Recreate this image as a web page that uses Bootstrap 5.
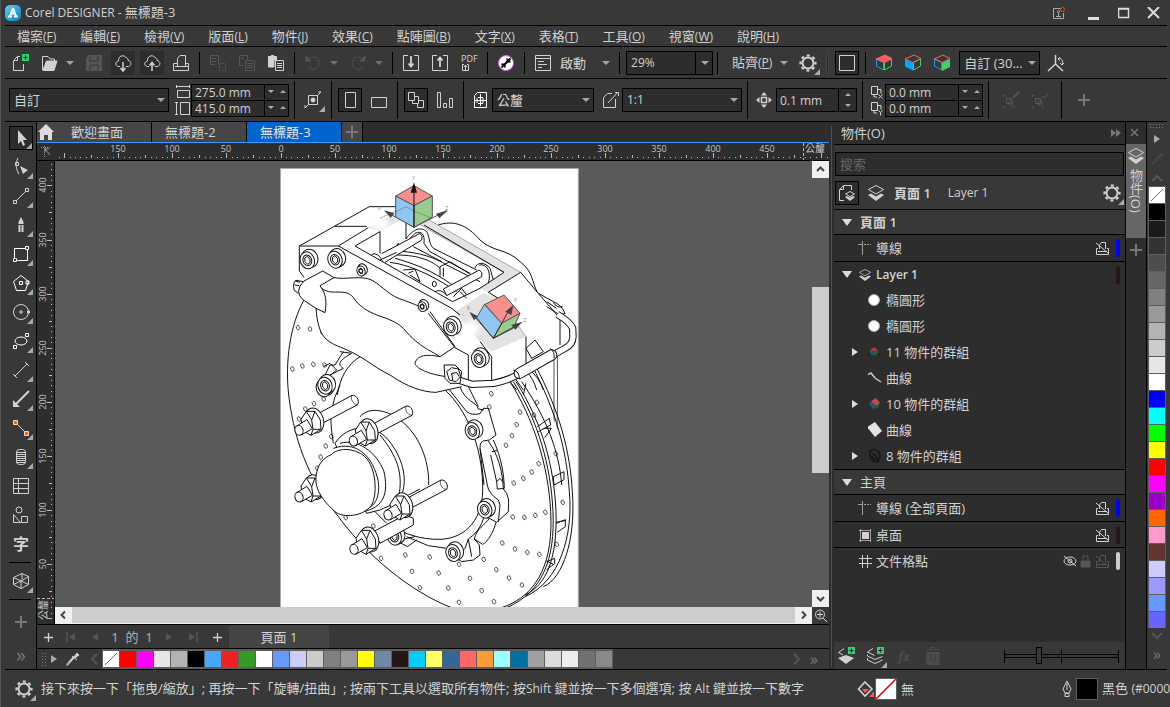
<!DOCTYPE html>
<html lang="zh-Hant">
<head>
<meta charset="utf-8">
<meta name="viewport" content="width=device-width, initial-scale=1">
<title>Corel DESIGNER - 無標題-3</title>
<link rel="stylesheet" href="https://cdn.jsdelivr.net/npm/bootstrap@5.3.0/dist/css/bootstrap.min.css">
<script defer src="https://cdn.jsdelivr.net/npm/bootstrap@5.3.0/dist/js/bootstrap.bundle.min.js"></script>
<style>
:root{--bar:#383838;--dark:#2d2d2d;--ink:#d2d2d2;--dim:#555;--line:#000}
body{background:var(--bar);color:var(--ink);font:13px/20px "Open Sans","Noto Sans CJK TC",sans-serif;height:100vh;overflow:hidden;border-left:1px solid #555;padding:0 3px 0 4px}
button{background:none;border:0;padding:0;color:inherit;font:inherit;flex:none}
svg{display:block;flex:none}
.lat{font-size:12px}
.mh{min-height:0}.mw{min-width:0}
.clip{overflow:hidden;white-space:nowrap}
.ic{width:24px;height:24px;fill:none;stroke:currentColor}
.line-t{border-top:1px solid var(--line)}
.titlebar{height:25px}
.titlebar button{width:26px;display:flex;justify-content:center}
.titlebar .wide1{width:34px}.titlebar .wide2{width:44px}
.menubar{height:21px}
.menubar a{color:var(--ink);text-decoration:none;padding:0 12px}
.stdbar{height:32px;padding-left:3px}
.propbar{height:43px;padding-left:4px}
.ib{width:24px;height:24px;margin-right:5px;position:relative}
.ib.on{border:1px solid var(--line);background:var(--dark)}
.ib.on .ic{margin:-1px}
.ib.cloudy{background:var(--dark)}
.off{color:var(--dim)}
.lighter{color:#777}
.fly::after{content:"";position:absolute;right:0;bottom:0;border:3px solid transparent;border-right-color:#aaa;border-bottom-color:#aaa}
.tri{width:8px;height:24px;margin-right:8px;position:relative}
.tri::after,.pick::after{content:"";display:block;border:4px solid transparent;border-top-color:#a5a5a5;border-bottom:0}
.sp{width:1px;background:var(--line);margin:0 6px 0 1px;flex:none}
.stdbar .sp{height:22px}.propbar .sp{height:38px}
.sp.grabber{width:3px;background:#2a2a2a;border:1px solid #444}
.pick{position:relative}
.pick select{appearance:none;width:100%;height:24px;background:var(--dark);border:1px solid var(--line);color:var(--ink);padding:0 4px;line-height:20px;border-radius:0;outline:0}
.pick::after{position:absolute;right:4px;top:10px;pointer-events:none}
.pick.split::before{content:"";position:absolute;right:17px;top:0;height:24px;width:1px;background:var(--line)}
.wz{width:87px}.wp{width:81px}.ws{width:160px}.wu{width:102px}.wc{width:120px;margin-right:4px}
.propbar .lab{margin-left:-2px}
.spin{border:1px solid var(--line);background:var(--dark)}
.spin input{background:none;border:0;color:var(--ink);min-width:0;flex:1;padding:0 3px;height:15px;line-height:15px;font-size:12px;outline:0}
.spin .arr{width:24px;border-left:1px solid var(--line)}
.up,.dn{width:12px;height:14px;display:flex;align-items:center;justify-content:center}
.up::after{content:"";border:3px solid transparent;border-bottom-color:#aaa;border-top:0}
.dn::after{content:"";border:3px solid transparent;border-top-color:#aaa;border-bottom:0}
.pairicon{width:16px;height:32px;margin:0 0 0 6px}.pairicon.nogap{margin-left:0}
.pair{width:98px;margin-right:4px}.pair .spin{height:17px}.pair .spin+.spin{margin-top:-1px}
.tallspin{width:81px;height:24px;margin-right:4px}.tallspin .arr{width:18px}.tallspin .arr button{height:11px}
.toolbox{width:32px;padding:4px 0 0 4px;border-right:1px solid var(--line)}
.toolbox .ib{margin:0 0 5px}
.toolbox hr{width:22px;margin:1px 0 6px;border-top:1px solid #000;opacity:1}
.doctabs{height:21px;background:var(--dark);border-bottom:1px solid #39f}
.doctabs button{height:20px;background:#464646;border-right:1px solid var(--line)}
.doctabs .active{background:#0064cf;color:#e6e6e6}
.t1{width:115px}.t1 span{margin-left:16px}
.doctabs .t2{width:95px;text-align:left;padding-left:13px}.t3{width:21px}
.ruler{background:var(--dark)}
.ruler text{fill:#c4c4c4;font:9px "Open Sans",sans-serif}
.ruler text.cj{font:10px "Noto Sans CJK TC",sans-serif}
.corner{width:18px}
.vrule{border-right:1px solid var(--line)}
.hr-row{height:18px;border-bottom:1px solid var(--line)}
.canvas{background:#5a5a5a;padding:4px 8px 0 0;min-width:0;overflow:hidden}
.vbar{width:17px;background:#5a5a5a}
.vbar button,.hbar button{width:17px;height:17px;background:#f0f0f0;color:#444}
.vtop{height:109px}.vthumb{background:#cdcdcd;height:186px}
.hbar{height:17px;background:#cdcdcd;border-bottom:1px solid #f0f0f0}
.hbar button{height:16px}
.pagenav{height:24px}
.pagenav .nv{width:24px;height:23px;display:flex;align-items:center;justify-content:center}
.pagenav .nv:first-child{width:22px}
.pagenav .ic{width:20px;height:20px}
.pgno{width:50px;text-align:center;color:#b0b0b0}
.pagetab{width:100px;height:23px;background:#454545}
.hpal{height:21px}
.swatches{background:#5e5e5e}
.sw{width:16px;height:16px;margin:1px 1px 0 0;display:block}
.hsw{padding-left:1px}.hsw .sw{margin-top:2px}
.palarrow{padding:0 4px 0 6px}
.palmore{margin:0 11px 0 8px}
.gapcol{width:5px;background:var(--dark);position:relative}
.gapcol::after{content:"";position:absolute;left:2px;top:4px;bottom:2px;width:1px;background:#505050}
.docker{width:292px;border-right:1px solid var(--line)}
.dhead{height:22px;background:var(--dark);padding-left:7px}
.ddx{margin-right:-15px;position:relative}
.find{background:var(--dark);border:1px solid var(--line);height:24px;margin:7px 1px 0;color:var(--ink);padding:0 4px;outline:0}
.find::placeholder{color:#666}
.ctx{height:33px}
.ctx .first{margin:0 5px 0 1px}.ctx .page{margin:0 17px 0 6px}.ctx .last{margin-right:1px}
.tree{background:var(--dark)}
.tree li{height:26px;display:flex;align-items:center;position:relative}
.tree .grp{height:25px;background:var(--bar);border-top:1px solid var(--line)}
.tree .lay{border-top:1px solid var(--line)}
.tree .lay.tall{height:27px}
.tw{width:26px;display:flex;justify-content:center;flex:none}
.tw::after{content:"";border:5px solid transparent;border-top:7px solid #ddd;border-bottom:0}
.tw.shut::after{border:4px solid transparent;border-left:6px solid #ddd;border-right:0}
.tw.leaf::after{display:none}
.sub .tw{margin-left:8px}
.ti{width:18px;height:18px;fill:none;stroke:currentColor}
.lay .tw+.ti{margin:0 2px 0 -4px}
.lay .ti+.ti{margin-left:-2px}
.bar{width:4px;height:18px;border-radius:2px;margin:0 5px 0 5px}
.bblue{background:#00f}.bbrown{background:#231815}.bgrey{background:#ccc}
.dfoot{height:27px}
.dfoot .off{color:#4c4c4c}
.dfoot input{appearance:none;width:115px;height:17px;margin-right:6px;outline:0;background:linear-gradient(#000,#000) 0 3px/1px 13px no-repeat,linear-gradient(#000,#000) 57px 3px/1px 13px no-repeat,linear-gradient(#000,#000) 114px 3px/1px 13px no-repeat,linear-gradient(#000,#000) 0 7px/115px 1px no-repeat,linear-gradient(#000,#000) 0 10px/115px 1px no-repeat}
.dfoot input::-webkit-slider-thumb{appearance:none;width:6px;height:17px;background:var(--bar);border:1px solid #000}
.side{width:21px;background:var(--dark);border-right:1px solid var(--line)}
.sidetab{height:94px;margin-top:22px;background:#666;writing-mode:vertical-rl;line-height:20px}
.sidetab span{padding-top:1px}
.vpal{width:20px}
.vpal .swatches{width:18px;padding-left:1px}
.vgrip{width:16px;height:7px;margin:1px 0;background:radial-gradient(#777 1px,transparent 1px) 0 0/3px 3px}
.tw.vm{height:16px;align-items:center}.tw.vm::after,.tw.palm::after{border-left-color:#aaa}.tw.palm{width:13px}
.vd{height:23px;opacity:.5}
.vsc{height:16px}
.statusbar{height:38px;padding-left:7px}
.chip{width:22px;height:22px;border:1px solid #5e5e5e}
.stat2{width:201px}.stat3{width:112px}
.stat2 .ic,.stat3 .ic{margin-right:-3px}
.grip{width:6px;height:15px;background:radial-gradient(#777 1px,transparent 1px) 0 0/3px 3px}
.fw{font-weight:600}
</style>
</head>
<body class="d-flex flex-column">
<svg width="0" height="0" class="position-absolute" aria-hidden="true">
<defs>
<linearGradient id="gl" x2="1" y2="1"><stop stop-color="#5fd3f5"/><stop offset="1" stop-color="#0877c2"/></linearGradient>
<symbol id="new" viewBox="0 0 24 24"><path d="M12 5.500H9.500L5.500 9.500V19.500H15.500V13M9.500 5.500V9.500H5.500"/><path fill="#2fd36b" stroke="none" d="M14 3h7v7h-7z"/><path d="M17.500 4.500v4M15.500 6.500h4" stroke="#111"/></symbol>
<symbol id="open" viewBox="0 0 24 24"><path d="M5.500 19V5.500H11L13 8H17.500V10"/><path fill="currentColor" d="M6 19 9.500 10H20L17 19.500H6z"/></symbol>
<symbol id="save" viewBox="0 0 24 24"><path fill="currentColor" stroke="none" d="M7 4h13v16H4V7z"/><path d="M8 5v5h8V5M8 19v-5h8v5" stroke="#383838"/></symbol>
<symbol id="cloudd" viewBox="0 0 24 24"><path d="M9 15.500H7.500C4 15 3.500 11 7.500 10 7 5 12 3.500 14.500 6 17 7 17 8 17 9.500 21 10 20.500 15 17.500 15.500H15"/><path d="M12 11v8M9.500 17l2.500 3 2.500-3" stroke-width="1.500"/></symbol>
<symbol id="cloudu" viewBox="0 0 24 24"><path d="M9 15.500H7.500C4 15 3.500 11 7.500 10 7 5 12 3.500 14.500 6 17 7 17 8 17 9.500 21 10 20.500 15 17.500 15.500H15"/><path d="M12 20v-8M9.500 14.500l2.500-3 2.500 3" stroke-width="1.500"/></symbol>
<symbol id="print" viewBox="0 0 24 24"><path d="M8.500 15V7.500L11 4.500h5.500V15M8 12.500H4.500v7h15v-7H17M6 15.500h13"/></symbol>
<symbol id="cut" viewBox="0 0 24 24"><path d="M4.500 4.500h8v8M4.500 4.500v9H9M6 7.500h4M6 10.500h4"/><path d="M13.500 12.500h6v7h-6z" stroke-dasharray="2 1"/></symbol>
<symbol id="copy" viewBox="0 0 24 24"><path d="M4.500 4.500h8v4M4.500 4.500v10H8M6 7.500h3M10.500 9.500h9v10h-9zM12 12.500h6M12 14.500h6M12 16.500h6"/></symbol>
<symbol id="paste" viewBox="0 0 24 24"><path fill="currentColor" d="M4.500 5.500h8V9H10v7H4.500z"/><path d="M7 4.500h3M11.500 9.500h8v10h-8zM13 12.500h5M13 14.500h5M13 16.500h5"/></symbol>
<symbol id="undo" viewBox="0 0 24 24"><path d="M6 9C9 4 19 6 18 13 17 19 9 20 7 16" stroke-dasharray="3 1"/><path fill="currentColor" d="M5 5v5h5z"/></symbol>
<symbol id="redo" viewBox="0 0 24 24"><path d="M18 9C15 4 5 6 6 13 7 19 15 20 17 16" stroke-dasharray="3 1"/><path fill="currentColor" d="M19 5v5h-5z"/></symbol>
<symbol id="imp" viewBox="0 0 24 24"><path d="M9 4.500H4.500v15h15v-15H15"/><path d="M12 5v9M9.500 12.500l2.500 3 2.500-3" stroke-width="1.800"/></symbol>
<symbol id="exp" viewBox="0 0 24 24"><path d="M9 4.500H4.500v15h15v-15H15"/><path d="M12 16V7M9.500 9.500l2.500-3 2.500 3" stroke-width="1.800"/></symbol>
<symbol id="corel" viewBox="0 0 24 24"><circle cx="12" cy="12" r="7.500" fill="#fff" stroke="#d75be8"/><path d="M7.500 16.500l9-9" stroke="#000" stroke-width="2"/><path d="M13 7.500V11h3.500zM11 16.500V13H7.500z" stroke="#000" fill="#000"/></symbol>
<symbol id="launch" viewBox="0 0 24 24"><path d="M4.500 4.500h15v15h-15zM4.500 7.500h15M7 10.500h6M7 13.500h9M7 16.500h4"/></symbol>
<symbol id="gear" viewBox="0 0 24 24"><circle cx="12" cy="12" r="5.500" stroke-width="2"/><circle cx="12" cy="12" r="7.500" stroke-width="2.200" stroke-dasharray="3 2.890" stroke-dashoffset="1.500"/></symbol>
<symbol id="frame" viewBox="0 0 24 24"><path d="M4.500 4.500h15v15h-15z"/></symbol>
<symbol id="cubet" viewBox="0 0 24 24"><path d="M4.500 8v7l7 4V11z" stroke="#0af"/><path d="M12.500 11v8l7-4V8z" stroke="#3fd26b"/><path d="M4 8l9-4 7 3.500-8 4z" fill="#ff5d5d" stroke="#ff5d5d"/></symbol>
<symbol id="cubel" viewBox="0 0 24 24"><path d="M12.500 11v8l7-4V8z" stroke="#3fd26b"/><path d="M4 8l9-4 7 3.500-8 4z" stroke="#ff5d5d"/><path d="M4 8.500v7l8 4V12z" fill="#0af" stroke="none"/></symbol>
<symbol id="cuber" viewBox="0 0 24 24"><path d="M4.500 8v7l7 4V11z" stroke="#0af"/><path d="M4 8l9-4 7 3.500-8 4z" stroke="#ff5d5d"/><path d="M12 12v8l8-4V8z" fill="#3fd26b" stroke="none"/></symbol>
<symbol id="axis" viewBox="0 0 24 24"><path d="M11.500 4v9L4 20M11.500 13 19 20" stroke-width="1.500"/><path d="M14 8c3-2 6 2 4 6M16 6l-2 2 2 2M16 12l2 2 2-2"/></symbol>
<symbol id="dims" viewBox="0 0 16 32"><path d="M1 2.500h14M1.500 1v3M14.500 1v3M2.500 6.500h12v7h-12zM5.500 18.500h9v12h-9zM1.500 18v13M0 18.500h3M0 30.500h3"/></symbol>
<symbol id="dup" viewBox="0 0 16 32"><path d="M2.500 2.500h6v8h-6zM9 5.500h3v4M5 10v3h3M9.500 10.500l4 4M13.500 10.500l-4 4M2.500 18.500h6v8h-6zM9 21.500h3v4M5 26v3h3M9.500 26.500l2 2 2-2M11.500 28.500v3"/></symbol>
<symbol id="treat" viewBox="0 0 24 24"><path d="M7.500 7.500h9v9h-9zM4 20l4-4M16 8l4-4M4 20v-3M20 4h-3"/><circle cx="12" cy="12" r="2" fill="currentColor"/></symbol>
<symbol id="port" viewBox="0 0 24 24"><path d="M7.500 4.500h10v15h-10z"/></symbol>
<symbol id="landsc" viewBox="0 0 24 24"><path d="M4.500 9.500h15v10h-15z"/></symbol>
<symbol id="pages" viewBox="0 0 24 24"><path d="M4.500 4.500h6v8h-6zM10.500 8.500h4v7h-6v-3M14.500 12.500h5v7h-6v-4"/></symbol>
<symbol id="bars" viewBox="0 0 24 24"><path d="M4.500 4.500h3v15h-3zM10.500 15.500h3v4h-3zM16.500 10.500h3v9h-3z"/></symbol>
<symbol id="unit" viewBox="0 0 24 24"><path stroke="#fff" d="M9.500 4.500h9v15h-12v-12zM12.500 6v12M7 12.500h11M9 10v5M15 10v5M10 9.500h5M10 15.500h5"/></symbol>
<symbol id="scale" viewBox="0 0 24 24"><path d="M14 5.500H9.500l-4 4v10h12V11M10 15L19 5M17 4.500h3.500V8"/></symbol>
<symbol id="nudge" viewBox="0 0 24 24"><path d="M9.500 9.500h5v5h-5z" stroke-width="1.500"/><path fill="currentColor" stroke="none" d="M12 4l3 3.500H9zM12 20l3-3.500H9zM4 12l3.500-3v6zM20 12l-3.500-3v6z"/></symbol>
<symbol id="symed" viewBox="0 0 24 24"><path d="M4.500 9V7.500H6M15.500 18v1.500H14M4.500 18v1.500H6M7.500 10.500h5v5h-5z"/><circle cx="12" cy="15" r="2.500"/><path d="M14 10l6-6" stroke-width="2"/></symbol>
<symbol id="symok" viewBox="0 0 24 24"><path d="M4.500 9V7.500H6M15.500 18v1.500H14M4.500 18v1.500H6M7.500 10.500h5v5h-5z"/><circle cx="12" cy="15" r="2.500"/><path d="M14 8l2 2 4-4"/></symbol>
<symbol id="plus" viewBox="0 0 24 24"><path d="M12 6v12M6 12h12" stroke-width="2"/></symbol>
<symbol id="thinplus" viewBox="0 0 20 20"><path d="M10.500 6v9M6 10.500h9" stroke-width="1.300"/></symbol>
<symbol id="arrow" viewBox="0 0 24 24"><path fill="currentColor" stroke="none" d="M9 4v14l3-3 2 5 2-1-2-5h4z"/></symbol>
<symbol id="shape" viewBox="0 0 24 24"><path d="M9 3C6 9 7 14 10 19M6.500 7.500h3v3h-3z"/><path fill="currentColor" stroke="none" d="M11 11l8 4-5 4z"/></symbol>
<symbol id="linet" viewBox="0 0 24 24"><path d="M7 17L17 7M4.500 16.500h3v3h-3zM16.500 4.500h3v3h-3z"/></symbol>
<symbol id="brush" viewBox="0 0 24 24"><path fill="currentColor" stroke="none" d="M12 4l2.500 5v2h-5V9zM9.500 12h5v7h-5z"/><path d="M12 12v7" stroke="#383838"/></symbol>
<symbol id="rectt" viewBox="0 0 24 24"><path stroke="#fff" d="M5.500 6.500h13v12h-13z"/><path stroke="#fff" fill="#383838" d="M4.500 16.500h3v3h-3zM16.500 4.500h3v3h-3z"/></symbol>
<symbol id="penta" viewBox="0 0 24 24"><path stroke="#fff" d="M12 4.500l7.500 6-3 9h-9l-3-9zM10.500 10.500h3v3h-3zM17 10h3v3h-3z"/></symbol>
<symbol id="circt" viewBox="0 0 24 24"><circle cx="12" cy="12" r="7.500"/><path d="M11 11h2v2h-2zM18.500 11h2v2h-2z"/></symbol>
<symbol id="elli" viewBox="0 0 24 24"><ellipse cx="12" cy="12" rx="6" ry="4" stroke="#fff"/><path stroke="#fff" d="M4.500 16.500h3v3h-3zM16.500 4.500h3v3h-3z"/></symbol>
<symbol id="dimt" viewBox="0 0 24 24"><path d="M6 18L18 6M4 16l4 4M16 4l4 4"/></symbol>
<symbol id="leader" viewBox="0 0 24 24"><path d="M20 4L7 17" stroke-width="2"/><path fill="currentColor" stroke="none" d="M4 20V13l7 7z"/></symbol>
<symbol id="conn" viewBox="0 0 24 24"><path d="M7 7l11 11"/><path fill="#f60" stroke="#ddd" d="M4.500 4.500h4v4h-4zM15.500 15.500h4v4h-4z"/></symbol>
<symbol id="spring" viewBox="0 0 24 24"><rect x="7.500" y="4.500" width="9" height="15" rx="3"/><path d="M7 7.500h10M7 9.500h10M7 11.500h10M7 13.500h10M7 15.500h10M7 17.500h10"/></symbol>
<symbol id="tablei" viewBox="0 0 24 24"><path d="M4.500 4.500h15v15h-15zM4.500 9.500h15M4.500 14.500h15M9.500 4.500v15"/></symbol>
<symbol id="shapes" viewBox="0 0 24 24"><circle cx="10" cy="7" r="3"/><path d="M12.500 13.500h6v6h-6zM4.500 11.500v8h7z"/></symbol>
<symbol id="iso" viewBox="0 0 24 24"><path d="M4.500 8.500L13 4.500l6.500 3v8L12 19.500l-7.500-4zM4.500 8.500L12 12l7.500-4.500M12 12v7.500M12 12l-7.500 3.500M12 12l7.500 3.500M13 4.500v6"/></symbol>
<symbol id="layers" viewBox="0 0 24 24"><path d="M12 4.500l7.500 4L12 13 4.500 8.500z"/><path fill="currentColor" stroke="none" d="M4 14l3-1.500 5 3 5-3 3 1.500-8 6z"/></symbol>
<symbol id="layadd" viewBox="0 0 24 24"><path d="M10 4.500L4.500 8.500 9 11"/><path fill="currentColor" stroke="none" d="M4 14l8-3 8 3-8 6z"/><path fill="#2fd36b" stroke="none" d="M14 3h7v7h-7z"/><path d="M17.500 4.500v4M15.500 6.500h4" stroke="#111"/></symbol>
<symbol id="layadd2" viewBox="0 0 24 24"><path d="M10 4.500L4.500 8l7 3.500M4.500 10.500V12l7.500 3.500 7.500-3M4.500 14v2l7.500 3.500 7.500-3.500"/><path fill="#2fd36b" stroke="none" d="M14 3h7v7h-7z"/><path d="M17.500 4.500v4M15.500 6.500h4" stroke="#111"/></symbol>
<symbol id="trash" viewBox="0 0 24 24"><path fill="currentColor" d="M6 8.500h12v12H6zM5 5.500h14M10 3.500h4"/><path d="M10 10v8M14 10v8" stroke="#383838"/></symbol>
<symbol id="pglay" viewBox="0 0 24 24"><path d="M9 19.500H4.500v-11l4-4h8V9M8.500 5v3.500H5"/><path d="M15 10.500l4.500 2.500-4.500 2.500-4.500-2.500z"/><path fill="currentColor" stroke="none" d="M10 16l2-1 3 1.500 3-1.500 2 1-5 4z"/></symbol>
<symbol id="guide" viewBox="0 0 18 18"><path d="M6.500 2v14M2 5.500h4M8 5.500h2M11 5.500h2M14 5.500h1" opacity=".7"/></symbol>
<symbol id="noprint" viewBox="0 0 18 18"><path d="M6.500 10V6l2-2.500h4V10M5 9.500H3.500v6h12v-6H14M5 12.500h9M3 4l12 10"/></symbol>
<symbol id="desk" viewBox="0 0 18 18"><path d="M3 4.500h12M3 14.500h12M4.500 3v13M14.500 3v13" opacity=".7"/><path fill="currentColor" stroke="none" d="M6 6h7v7H6z"/></symbol>
<symbol id="hash" viewBox="0 0 18 18"><path d="M6.500 3v13M11.500 3v13M3 6.500h13M3 11.500h13"/></symbol>
<symbol id="eye" viewBox="0 0 18 18"><ellipse cx="9" cy="9" rx="6" ry="4"/><circle cx="9" cy="9" r="2"/><path d="M3 4l12 10"/></symbol>
<symbol id="lock" viewBox="0 0 18 18"><path fill="currentColor" d="M4 9h9v6H4z"/><path d="M6 9V4h5v5"/></symbol>
<symbol id="dropper" viewBox="0 0 24 24"><path d="M7 18l7-8" stroke-width="2"/><path fill="currentColor" d="M12 9l5 4M14 10l3-4 2 2-4 3z"/></symbol>
<symbol id="zoomi" viewBox="0 0 17 17"><circle cx="8" cy="7.500" r="4.500"/><path d="M8 4.500v6M5 7.500h6M11 11l4 4"/></symbol>
<symbol id="bucket" viewBox="0 0 24 24"><path d="M11 5l7 7-7 7-6.500-7z" stroke-width="1.600"/><path fill="#f55" stroke="none" d="M8 12h7l-4 4zM20 14v6h-5z"/></symbol>
<symbol id="pen" viewBox="0 0 24 24"><path d="M12 4l4 8-2 4h-4l-2-4zM12 6v7M10 16.500h4v3h-4z"/></symbol>
<symbol id="bolt" overflow="visible"><g fill="#fff" stroke="#111" stroke-width="3"><ellipse cx="9" cy="-3" rx="24" ry="28" transform="rotate(-20)"/><ellipse rx="21" ry="26" transform="rotate(-20)"/><ellipse rx="13" ry="16" transform="rotate(-20)"/><path d="M-8-7L0-12 8-3 8 7 1 12-7 4z"/></g></symbol>
<symbol id="smallbolt" overflow="visible"><g fill="#fff" stroke="#111" stroke-width="3"><ellipse cx="6" cy="-3" rx="14" ry="17" transform="rotate(-20)"/><ellipse rx="12" ry="15" transform="rotate(-20)"/><path d="M-6-4L0-8 5-2 4 6-1 7-6 2z" stroke-width="4"/></g></symbol>
<symbol id="nutfront" overflow="visible"><g fill="#fff" stroke="#111" stroke-width="3"><ellipse cx="10" cy="-4" rx="27" ry="38" transform="rotate(-16)"/><path d="M-32-10L-16-34 10-34 26-8 28 20-2 38-26 24z"/><path d="M-16-34L0-8 10-34M0-8L4 20-2 38M4 20L28 20" fill="none"/><path d="M-45 10L-14-9 2 18-31 37z"/><ellipse cx="-38" cy="23" rx="12" ry="15" transform="rotate(-18 -38 23)"/></g></symbol>
<symbol id="stud" overflow="visible"><path d="M10-22L121-82C134-84 145-66 138-54L24 6z" fill="#fff" stroke="#111" stroke-width="3"/><path d="M121-82c-6 8 2 28 17 28" fill="none" stroke="#111" stroke-width="2"/><use href="#nutfront"/></symbol>
<radialGradient id="glow"><stop offset=".3" stop-color="#fff"/><stop offset="1" stop-color="#fff" stop-opacity="0"/></radialGradient>
</defs>
</svg>

<header class="titlebar d-flex align-items-center flex-shrink-0">
  <svg width="16" height="16" viewBox="0 0 16 16"><rect width="16" height="16" rx="5" fill="url(#gl)"/><path d="M8 3L5 11M8 3l3 8M6 8.500h4M3 11.500h4M9 11.500h4" stroke="#fff" stroke-width="1.800" fill="none"/></svg>
  <span class="ms-1 flex-grow-1"><span class="lat">Corel DESIGNER - </span>無標題-3</span>
  <button aria-label="帳戶" class="wide2"><svg width="12" height="12" viewBox="0 0 12 12" fill="none" stroke="#aaa"><path d="M8 1.500H.5v10h10V6M3 9.500h5M5.500 5v4"/><circle cx="5.500" cy="4.500" r="1"/><circle cx="9.500" cy="2.500" r="2" stroke="#d4500f"/></svg></button>
  <button aria-label="最小化"><svg width="12" height="14" viewBox="0 0 12 14"><path d="M0 11h11v3H0z" fill="#ddd"/></svg></button>
  <button aria-label="最大化" class="wide1"><svg width="12" height="12" viewBox="0 0 12 12"><path d="M.5 1.500h10v9H.500zM0 2h11" fill="none" stroke="#ddd" stroke-width="1.500"/></svg></button>
  <button aria-label="關閉"><svg width="14" height="12" viewBox="0 0 14 12"><path d="M1 0l11 11M12 0L1 11" fill="none" stroke="#ddd" stroke-width="2"/></svg></button>
</header>

<nav class="menubar line-t d-flex align-items-center flex-shrink-0">
  <a href="#">檔案<span class="lat">(<u>F</u>)</span></a><a href="#">編輯<span class="lat">(<u>E</u>)</span></a><a href="#">檢視<span class="lat">(<u>V</u>)</span></a><a href="#">版面<span class="lat">(<u>L</u>)</span></a><a href="#">物件<span class="lat">(<u>J</u>)</span></a><a href="#">效果<span class="lat">(<u>C</u>)</span></a><a href="#">點陣圖<span class="lat">(<u>B</u>)</span></a><a href="#">文字<span class="lat">(<u>X</u>)</span></a><a href="#">表格<span class="lat">(<u>T</u>)</span></a><a href="#">工具<span class="lat">(<u>O</u>)</span></a><a href="#">視窗<span class="lat">(<u>W</u>)</span></a><a href="#">說明<span class="lat">(<u>H</u>)</span></a>
</nav>

<div class="stdbar line-t d-flex align-items-center flex-shrink-0">
  <button class="ib" aria-label="新增"><svg class="ic"><use href="#new"/></svg></button>
  <button class="ib" aria-label="開啟"><svg class="ic"><use href="#open"/></svg></button>
  <button class="tri d-flex align-items-center" aria-label="最近使用"></button>
  <button class="ib off" aria-label="儲存"><svg class="ic"><use href="#save"/></svg></button>
  <button class="ib cloudy" aria-label="從雲端開啟"><svg class="ic"><use href="#cloudd"/></svg></button>
  <button class="ib cloudy" aria-label="儲存至雲端"><svg class="ic"><use href="#cloudu"/></svg></button>
  <button class="ib" aria-label="列印"><svg class="ic"><use href="#print"/></svg></button>
  <span class="sp"></span>
  <button class="ib off" aria-label="剪下"><svg class="ic"><use href="#cut"/></svg></button>
  <button class="ib off" aria-label="複製"><svg class="ic"><use href="#copy"/></svg></button>
  <button class="ib" aria-label="貼上"><svg class="ic"><use href="#paste"/></svg></button>
  <span class="sp"></span>
  <button class="ib off" aria-label="復原"><svg class="ic"><use href="#undo"/></svg></button>
  <button class="tri opacity-50 d-flex align-items-center" aria-label="復原清單"></button>
  <button class="ib off" aria-label="重做"><svg class="ic"><use href="#redo"/></svg></button>
  <button class="tri opacity-50 d-flex align-items-center" aria-label="重做清單"></button>
  <span class="sp"></span>
  <button class="ib" aria-label="匯入"><svg class="ic"><use href="#imp"/></svg></button>
  <button class="ib" aria-label="匯出"><svg class="ic"><use href="#exp"/></svg></button>
  <button class="ib" aria-label="發佈為 PDF"><svg class="ic" viewBox="0 0 24 24"><text x="4" y="11" font-size="9" fill="currentColor" stroke="none">PDF</text><path d="M7 13.500H5.500v6h6v-6H10M8.500 19v-5M7 16l1.500-2 1.500 2"/></svg></button>
  <span class="sp"></span>
  <button class="ib" aria-label="Corel"><svg class="ic"><use href="#corel"/></svg></button>
  <span class="sp"></span>
  <button class="ib" aria-label="啟動圖示"><svg class="ic"><use href="#launch"/></svg></button>
  <button class="me-3">啟動</button>
  <button class="tri d-flex align-items-center" aria-label="啟動清單"></button>
  <span class="sp"></span>
  <div class="pick split wz"><select aria-label="縮放" class="lat"><option>29%</option></select></div>
  <span class="sp ms-1"></span>
  <button class="mx-2">貼齊<span class="lat">(<u>P</u>)</span></button>
  <button class="tri d-flex align-items-center" aria-label="貼齊清單"></button>
  <button class="ib fly" aria-label="選項"><svg class="ic"><use href="#gear"/></svg></button>
  <span class="sp grabber"></span>
  <button class="ib on" aria-label="頁框"><svg class="ic"><use href="#frame"/></svg></button>
  <span class="sp"></span>
  <button class="ib" aria-label="頂面"><svg class="ic"><use href="#cubet"/></svg></button>
  <button class="ib" aria-label="左面"><svg class="ic"><use href="#cubel"/></svg></button>
  <button class="ib" aria-label="右面"><svg class="ic"><use href="#cuber"/></svg></button>
  <div class="pick wp me-1"><select aria-label="投影"><option>自訂 (30...</option></select></div>
  <button class="ib" aria-label="座標軸"><svg class="ic"><use href="#axis"/></svg></button>
</div>

<div class="propbar line-t d-flex align-items-center flex-shrink-0">
  <div class="pick ws"><select aria-label="頁面大小"><option>自訂</option></select></div>
  <svg class="ic pairicon"><use href="#dims"/></svg>
  <div class="pair">
    <div class="spin d-flex"><input aria-label="寬度" value="275.0 mm"><span class="arr d-flex"><button class="dn" aria-label="減少寬度"></button><button class="up" aria-label="增加寬度"></button></span></div>
    <div class="spin d-flex"><input aria-label="高度" value="415.0 mm"><span class="arr d-flex"><button class="dn" aria-label="減少高度"></button><button class="up" aria-label="增加高度"></button></span></div>
  </div>
  <span class="sp"></span>
  <button class="ib fly" aria-label="貼齊物件"><svg class="ic"><use href="#treat"/></svg></button>
  <span class="sp"></span>
  <button class="ib on" aria-label="直向"><svg class="ic"><use href="#port"/></svg></button>
  <button class="ib" aria-label="橫向"><svg class="ic"><use href="#landsc"/></svg></button>
  <span class="sp"></span>
  <button class="ib on" aria-label="所有頁面"><svg class="ic"><use href="#pages"/></svg></button>
  <button class="ib" aria-label="目前頁面"><svg class="ic"><use href="#bars"/></svg></button>
  <span class="sp"></span>
  <svg class="ic lab"><use href="#unit"/></svg>
  <div class="pick wu"><select aria-label="單位"><option>公釐</option></select></div>
  <svg class="ic ms-1"><use href="#scale"/></svg>
  <div class="pick wc"><select aria-label="比例" class="lat"><option>1:1</option></select></div>
  <span class="sp"></span>
  <svg class="ic lab"><use href="#nudge"/></svg>
  <div class="spin tallspin d-flex align-items-center"><input aria-label="微調" value="0.1 mm"><span class="arr d-flex flex-column align-items-center"><button class="up" aria-label="增加微調"></button><button class="dn" aria-label="減少微調"></button></span></div>
  <span class="sp"></span>
  <svg class="ic pairicon nogap"><use href="#dup"/></svg>
  <div class="pair">
    <div class="spin d-flex"><input aria-label="再製 X" value="0.0 mm"><span class="arr d-flex"><button class="dn" aria-label="減少 X"></button><button class="up" aria-label="增加 X"></button></span></div>
    <div class="spin d-flex"><input aria-label="再製 Y" value="0.0 mm"><span class="arr d-flex"><button class="dn" aria-label="減少 Y"></button><button class="up" aria-label="增加 Y"></button></span></div>
  </div>
  <span class="sp"></span>
  <button class="ib off ms-1" aria-label="編輯符號"><svg class="ic"><use href="#symed"/></svg></button>
  <button class="ib off" aria-label="完成符號"><svg class="ic"><use href="#symok"/></svg></button>
  <span class="sp ms-1"></span>
  <button class="ib lighter ms-1" aria-label="自訂工具列"><svg class="ic"><use href="#plus"/></svg></button>
</div>

<main class="d-flex flex-grow-1 line-t mh">
  <div class="toolbox d-flex flex-column flex-shrink-0">
    <button class="ib on fly" aria-label="挑選"><svg class="ic"><use href="#arrow"/></svg></button>
    <button class="ib fly" aria-label="造形"><svg class="ic"><use href="#shape"/></svg></button>
    <button class="ib fly" aria-label="直線"><svg class="ic"><use href="#linet"/></svg></button>
    <button class="ib fly" aria-label="筆刷"><svg class="ic"><use href="#brush"/></svg></button>
    <button class="ib fly" aria-label="矩形"><svg class="ic"><use href="#rectt"/></svg></button>
    <button class="ib fly" aria-label="多邊形"><svg class="ic"><use href="#penta"/></svg></button>
    <button class="ib fly" aria-label="圓形"><svg class="ic"><use href="#circt"/></svg></button>
    <button class="ib fly" aria-label="橢圓形"><svg class="ic"><use href="#elli"/></svg></button>
    <button class="ib fly" aria-label="尺寸"><svg class="ic"><use href="#dimt"/></svg></button>
    <button class="ib fly" aria-label="引線"><svg class="ic"><use href="#leader"/></svg></button>
    <button class="ib fly" aria-label="連接器"><svg class="ic"><use href="#conn"/></svg></button>
    <button class="ib fly" aria-label="螺紋"><svg class="ic"><use href="#spring"/></svg></button>
    <button class="ib" aria-label="表格"><svg class="ic"><use href="#tablei"/></svg></button>
    <button class="ib" aria-label="圖形"><svg class="ic"><use href="#shapes"/></svg></button>
    <button class="ib fw-bold fs-6">字</button>
    <hr>
    <button class="ib fly" aria-label="投影"><svg class="ic"><use href="#iso"/></svg></button>
    <hr>
    <button class="ib lighter mt-1" aria-label="新增工具"><svg class="ic"><use href="#plus"/></svg></button>
    <button class="ib lighter mt-1 fs-5" aria-label="更多工具">»</button>
  </div>

  <section class="d-flex flex-column flex-grow-1 mw">
    <div class="doctabs d-flex flex-shrink-0">
      <button class="t1 d-flex align-items-center"><svg width="18" height="18" viewBox="0 0 18 18"><path d="M9 1l8 8h-2v8h-4v-5H7v5H3V9H1z" fill="#ddd"/></svg><span>歡迎畫面</span></button>
      <button class="t2">無標題-2</button>
      <button class="t2 active">無標題-3</button>
      <button class="t3 lighter d-flex justify-content-center" aria-label="新文件"><svg width="20" height="20" viewBox="2 2 20 20" fill="none" stroke="currentColor"><use href="#plus" width="24" height="24"/></svg></button>
    </div>
    <div class="hr-row ruler d-flex flex-shrink-0">
      <svg class="corner" height="17" viewBox="0 0 18 17" fill="none" stroke="#999"><path d="M4 4.500h10M7.500 3v12" stroke-dasharray="1 1"/><path d="M8 6l5 6M8 9V6h4"/></svg>
      <svg id="hr" class="flex-grow-1 mw" height="17"></svg>
    </div>
    <div class="d-flex flex-grow-1 mh">
      <svg id="vr" class="ruler h-100 vrule" width="18"></svg>
      <div class="d-flex flex-column flex-grow-1 mw">
        <div class="d-flex flex-grow-1 mh">
          <div class="canvas flex-grow-1 d-flex justify-content-center">
<svg id="sheet" width="300" height="450" viewBox="0 0 900 1350" fill="none" stroke="#111" stroke-width="3" stroke-linejoin="round">
<path d="M1.500 10.500H895V1350H1.500z" fill="#fff" stroke="#aaa"/>
<g>
<path d="M822 560V860Q835 870 832 560" stroke="#555"/>
<path d="M740 600C850 790 885 950 877 1040C870 1200 800 1280 735 1295L665 1325L515 1325L740 700z" fill="#fff" stroke="none"/>
<path d="M72 405C30 480 15 590 26 690C45 850 100 960 175 1055C260 1170 390 1280 515 1328H665C780 1280 815 1180 812 1040C805 900 760 760 690 650L400 500z" fill="#fff" stroke="none"/>
<path d="M72 405C30 480 15 590 26 690C45 850 100 960 175 1055C260 1170 390 1280 515 1328"/>
<path d="M665 1328C780 1290 820 1180 812 1040C805 900 760 760 690 650M700 650C775 770 812 900 819 1040C825 1180 790 1280 680 1328M708 650C785 770 822 900 828 1040C832 1180 800 1260 735 1290M725 650C800 760 838 860 845 960"/>
<path d="M755 600C830 740 860 860 868 980C880 1110 840 1250 735 1295M765 600C840 740 870 860 877 980C888 1120 850 1240 790 1265"/>
<path d="M738 655L730 690M772 785L808 760 812 780 775 800M790 790l24 0-20 28M820 935L852 920V944L822 960zM828 1075L856 1064V1085L832 1102M828 1072l30 -6M800 1190L824 1180V1196L800 1214M800 1188l20 10"/>
</g>
<g id="holes" stroke-width="2"></g>
<g transform="translate(0 660)">
<path d="M495 15C560 75 605 180 608 300C612 400 560 460 480 463C420 464 370 445 340 425" fill="#fff"/>
<path d="M505 10L560 80Q575 92 600 86L610 70H625L648 150 628 165L608 168Q598 175 600 190L612 300"/>
<path d="M540 5C555 50 590 50 595 72L612 75M565 5L595 65"/>
<path d="M625 168C655 210 668 260 670 312L680 325 686 345 685 380 650 412 628 400M640 165C665 220 672 270 673 310L652 312 650 290 632 210M636 200L654 196M650 290L660 280 672 295M600 190L622 300Q625 325 655 345L660 360 655 410"/>
<path d="M648 412C640 440 625 470 608 478L583 462C590 430 615 420 628 400M628 400L612 395Q600 440 565 462L555 490 530 520 545 530 580 525 600 510 598 480 583 462M565 462L575 515M500 490L445 482 380 455"/>
<path d="M405 455L372 462 340 462 382 485 410 465"/>
<path d="M240 95C270 60 330 80 360 105C420 150 448 230 446 300M155 75C150 110 155 140 160 175M180 0Q160 40 155 75"/>
<use href="#bolt" x="577" y="138"/><use href="#bolt" x="614" y="374"/><use href="#bolt" x="519" y="504"/><use href="#bolt" x="343" y="455"/><use href="#bolt" x="130" y="10"/>
<use href="#nutfront" x="95" y="313"/>
<use href="#stud" x="95" y="113"/>
<path d="M165 175C200 120 280 110 325 165C370 220 380 280 368 320C350 360 330 360 300 375L260 385z" fill="#fff"/>
<path d="M300 150C340 200 370 250 358 325"/>
<path d="M180 175C230 160 290 200 312 260C325 320 315 370 245 380" fill="#fff"/>
<path d="M160 190C230 165 280 215 295 290C300 340 285 370 240 378" fill="#fff"/>
<path d="M155 208C170 190 220 185 255 215C290 250 292 330 275 360C250 395 190 400 165 380C110 330 95 290 118 240C130 220 142 215 155 208z" fill="#fff"/>
<path d="M285 380L320 415M385 330L420 312"/>
<use href="#stud" x="258" y="145"/>
<path d="M280 440L375 390 400 400V420L300 475z" fill="#fff"/>
<use href="#stud" x="362" y="367"/>
<use href="#nutfront" x="260" y="470"/>
</g>
<g>
<path d="M180 560L215 565C170 590 175 600 190 610L130 640 150 600 165 600 190 560M240 575C200 600 180 640 172 690M130 605L150 595 170 615 140 640 125 655"/>
<use href="#bolt" x="135" y="662"/>
<path d="M475 180C520 165 560 178 600 225C640 262 680 250 720 290C760 320 755 350 772 382L840 460V540L738 620 520 660 300 500 58 318V243L268 125H378z" fill="#fff" stroke="none"/>
<path d="M108 430C115 520 140 530 190 550C260 580 270 600 330 630C380 665 430 682 468 682L545 665L635 650L738 615V515L520 400 162 338 120 360z" fill="#fff" stroke="none"/>
<path d="M378 125L722 322 625 382 600 370 672 322 378 155 300 200 265 188z" fill="#e3e3e3" stroke="none"/>
<path d="M525 440L610 385 655 400 738 515 635 560 585 515z" fill="#e3e3e3" stroke="none"/>
<ellipse cx="300" cy="178" rx="38" ry="26" fill="url(#glow)" stroke="none"/><ellipse cx="572" cy="492" rx="36" ry="34" fill="url(#glow)" stroke="none"/>
<path d="M475 180C520 165 560 178 600 225C640 262 680 250 720 290C760 320 755 350 772 382"/>
<path d="M265 188L175 243H58L268 125H378M58 243V318L72 337M165 184H260M225 243L300 200V265M378 155V222M225 243L518 410 600 370M175 243L515 430 540 450M722 322L772 382 840 460V540M722 322L625 382 655 400M738 515V615L635 650V575M672 322L600 370M432 180L672 322M445 445L525 548 565 570V655M635 575L600 530"/>
<path d="M378 125L722 322M378 155L672 322M300 160L378 125M655 400L738 515" stroke-width="1"/>
<path d="M162 338C200 345 240 330 275 345C310 365 330 395 370 405C395 415 410 420 420 425M450 440L525 545 480 575M120 365C150 400 200 360 225 405C270 460 330 450 370 490C420 550 460 560 480 575C430 565 410 575 405 595C410 615 460 630 500 635"/>
<path d="M108 430C115 520 140 530 190 550C260 580 270 600 330 630C380 665 430 682 468 682L545 665"/>
<path d="M70 350L48 346Q38 350 42 375L55 385"/>
<path d="M72 348L128 318 162 338 120 362C140 390 140 410 135 443L108 430 70 405Q40 380 72 348z" fill="#fff"/>
<path d="M46 348L60 352M44 360L58 362"/>
<path d="M320 285L355 235V260M350 270C420 270 460 290 480 310M400 245L485 290M345 280C420 300 480 330 530 370M355 258C420 262 470 280 500 300M480 335V305L510 290 575 330M490 335V308M370 315L405 312 420 350 390 330M385 325L400 318M330 292C400 300 480 345 530 380M520 395L545 370 560 390M540 380L560 400M500 300L600 350"/>
<ellipse cx="463" cy="357" rx="6" ry="8"/>
<path d="M378 222C400 190 425 185 440 200C450 215 445 235 460 250L590 315M390 220L405 205C425 195 435 210 432 235L450 260 570 325"/>
<path d="M585 310C590 290 615 290 630 310L640 345M598 300C620 295 635 320 625 355"/>
<path d="M305 266L420 205Q430 212 425 225L315 292M300 285L350 262M490 372L598 315Q610 322 605 335L500 392zM465 380Q480 370 500 390" fill="#fff"/>
<path d="M275 268Q295 260 308 290"/>
<path d="M775 385L820 410Q845 420 855 445L840 450 800 425M800 410L830 430M820 412Q830 430 848 425"/>
<path d="M738 550L765 525 790 560 755 580zM690 650L710 675M705 640L730 675M740 620Q760 640 770 675M745 610Q780 640 790 675"/>
<path d="M535 645L575 658 640 655Q690 645 720 625L855 550Q878 540 879 515L878 490Q870 470 832 448" stroke-width="22"/>
<path d="M535 645L575 658 640 655Q690 645 720 625L855 550Q878 540 879 515L878 490Q870 470 832 448" stroke="#fff" stroke-width="16"/>
<path d="M718 625L815 570" stroke-width="34" stroke-linecap="round"/><path d="M718 625L815 570" stroke="#fff" stroke-width="28" stroke-linecap="round"/>
<path d="M700 615Q718 620 718 640M810 550Q825 560 822 580"/>
<path d="M492 600L525 600 545 620 540 655 510 655 495 640z" fill="#fff"/><path d="M500 620L515 608 535 612 542 635 528 650 508 645zM515 625l15-2 8 12M515 625l3 20"/>
<use href="#bolt" x="82" y="286"/><use href="#bolt" x="165" y="284"/><use href="#bolt" x="512" y="487"/><use href="#bolt" x="596" y="582"/>
<use href="#smallbolt" x="243" y="318"/><use href="#smallbolt" x="427" y="425"/>
</g>
<g stroke="#555" stroke-width="3">
<path d="M402 187L318 140M402 187L500 137"/>
<path d="M402 62L457 93 402 122 347 93z" fill="#f88f8f"/><path d="M347 93L402 122V187L347 156z" fill="#90c6f2"/><path d="M402 122L457 93V156L402 187z" fill="#97cc8c"/>
<path d="M347 140L378 125 402 138 457 160" stroke-width="1" stroke="#333"/>
<path d="M402 187V70" stroke="#111"/>
<path d="M392 83L402 52 411 83z" fill="#111" stroke="none"/><path d="M312 136L343 145 332 158zM504 136L468 146 478 160z" fill="#444" stroke="none"/>
<path d="M615 418L672 390 720 445 665 475z" fill="#f88f8f"/><path d="M613 418L665 475 640 520 590 458z" fill="#90c6f2"/><path d="M665 475L720 445 700 490 640 520z" fill="#97cc8c"/>
<path d="M640 520L690 430M640 520L712 480M640 520L580 450" stroke="#333"/>
<path d="M700 420L676 440 694 450zM728 470L694 480 706 494zM568 440L582 466 594 454z" fill="#444" stroke="none"/>
</g>
<g fill="#888" stroke="none" font-family="Open Sans,sans-serif" font-size="17"><text x="396" y="45">Y</text><text x="293" y="136">X</text><text x="496" y="135">Z</text><text x="701" y="412">Y</text><text x="560" y="434">X</text><text x="730" y="472">Z</text></g>
</svg>
          </div>
          <div class="vbar d-flex flex-column flex-shrink-0">
            <button aria-label="向上捲動"><svg width="17" height="17" fill="none" stroke="#444" stroke-width="2"><path d="M5 10l3.500-3.500L12 10"/></svg></button>
            <div class="vtop"></div><div class="vthumb"></div><div class="flex-grow-1"></div>
            <button aria-label="向下捲動"><svg width="17" height="17" fill="none" stroke="#444" stroke-width="2"><path d="M5 7l3.500 3.500L12 7"/></svg></button>
          </div>
        </div>
        <div class="d-flex flex-shrink-0">
          <div class="hbar flex-grow-1 d-flex justify-content-between">
            <button aria-label="向左捲動"><svg width="17" height="16" fill="none" stroke="#444" stroke-width="2"><path d="M10 4.500L6.500 8l3.500 3.500"/></svg></button>
            <button aria-label="向右捲動"><svg width="17" height="16" fill="none" stroke="#444" stroke-width="2"><path d="M7 4.500L10.500 8 7 11.500"/></svg></button>
          </div>
          <button aria-label="導覽器"><svg width="17" height="17" fill="none" stroke="currentColor"><use href="#zoomi"/></svg></button>
        </div>
      </div>
    </div>
    <div class="pagenav line-t d-flex align-items-center flex-shrink-0">
      <button class="nv" aria-label="在前新增頁面"><svg class="ic"><use href="#thinplus"/></svg></button>
      <button class="nv off" aria-label="第一頁"><svg width="10" height="10"><path d="M1 0v10" stroke="currentColor" stroke-width="1.500"/><path d="M9 1v8L3 5z" fill="currentColor"/></svg></button>
      <button class="nv off" aria-label="上一頁"><svg width="8" height="10"><path d="M7 1v8L1 5z" fill="currentColor"/></svg></button>
      <span class="pgno">1&nbsp; 的&nbsp; 1</span>
      <button class="nv off" aria-label="下一頁"><svg width="8" height="10"><path d="M1 1v8L7 5z" fill="currentColor"/></svg></button>
      <button class="nv off" aria-label="最後一頁"><svg width="10" height="10"><path d="M9 0v10" stroke="currentColor" stroke-width="1.500"/><path d="M1 1v8L7 5z" fill="currentColor"/></svg></button>
      <button class="nv" aria-label="在後新增頁面"><svg class="ic"><use href="#thinplus"/></svg></button>
      <button class="pagetab">頁面 1</button>
    </div>
    <div class="hpal line-t d-flex align-items-center flex-shrink-0">
      <span class="grip ms-1"></span>
      <button class="tw shut palm" aria-label="調色盤選單"></button>
      <button aria-label="滴管"><svg class="ic"><use href="#dropper"/><path d="M6 19l4-4.500" stroke="#f60"/></svg></button>
      <button class="off palarrow" aria-label="捲動調色盤"><svg width="8" height="14" fill="none" stroke="currentColor" stroke-width="2"><path d="M7 2L2 7l5 5"/></svg></button>
      <div class="swatches d-flex h-100 hsw" id="hsw"></div>
      <button class="off ms-auto" aria-label="向右捲動調色盤"><svg width="10" height="14" fill="none" stroke="currentColor" stroke-width="2"><path d="M2 2l5 5-5 5"/></svg></button>
      <button class="lighter fs-6 palmore" aria-label="更多色彩">»</button>
    </div>
  </section>

  <div class="gapcol flex-shrink-0"></div>
  <aside class="docker d-flex flex-column flex-shrink-0">
    <div class="dhead d-flex align-items-center"><span class="flex-grow-1">物件(O)</span>
      <button class="lighter me-2" aria-label="收合"><svg width="12" height="10" fill="currentColor"><path d="M1 1l5 4-5 4zM6 1l5 4-5 4z"/></svg></button>
      <button class="lighter ddx" aria-label="關閉泊塢視窗"><svg width="10" height="10" fill="none" stroke="currentColor" stroke-width="1.500"><path d="M1 1l7 7M8 1L1 8"/></svg></button></div>
    <div class="line-t d-flex flex-column"><input class="find" type="search" placeholder="搜索" aria-label="搜索"></div>
    <div class="ctx d-flex align-items-center">
      <button class="ib on first" aria-label="頁面與圖層"><svg class="ic"><use href="#pglay"/></svg></button>
      <svg class="ic"><use href="#layers"/></svg>
      <span class="fw page">頁面 1</span><span class="flex-grow-1 lat">Layer 1</span>
      <button class="ib fly last" aria-label="物件選項"><svg class="ic"><use href="#gear"/></svg></button>
    </div>
    <ul class="tree list-unstyled mb-0 flex-grow-1">
      <li class="grp"><span class="tw"></span><span class="fw">頁面 1</span></li>
      <li class="lay tall"><span class="tw leaf"></span><svg class="ti"><use href="#guide"/></svg><span class="flex-grow-1">導線</span><svg class="ti"><use href="#noprint"/></svg><span class="bar bblue"></span></li>
      <li class="lay"><span class="tw"></span><svg class="ti"><use href="#layers"/></svg><span class="flex-grow-1 fw lat">Layer 1</span><span class="bar bbrown"></span></li>
      <li class="sub"><span class="tw leaf"></span><svg class="ti"><circle cx="6" cy="9" r="5.500" fill="#fff" stroke="#aaa"/></svg><span>橢圓形</span></li>
      <li class="sub"><span class="tw leaf"></span><svg class="ti"><circle cx="6" cy="9" r="5.500" fill="#fff" stroke="#aaa"/></svg><span>橢圓形</span></li>
      <li class="sub"><span class="tw shut"></span><svg class="ti"><path d="M2 7v4l4 2V9z" fill="#23506e" stroke="none"/><path d="M10 7v4l-4 2V9z" fill="#255d30" stroke="none"/><path d="M2 7l4-3 4 3-4 2z" fill="#a03c3c" stroke="none"/><path d="M0 12l2-1M12 12l-2-1" stroke="#111"/></svg><span>11 物件的群組</span></li>
      <li class="sub"><span class="tw leaf"></span><svg class="ti"><path d="M-1 6l4-2 4 5 6 4" stroke="#ccc" stroke-width="1.500"/></svg><span>曲線</span></li>
      <li class="sub"><span class="tw shut"></span><svg class="ti"><path d="M3 6l5 5-3 3-4-5z" fill="#24557c" stroke="none"/><path d="M3 6l5-3 4 5-4 3z" fill="#c54a4a" stroke="none"/><path d="M8 11l4-3-2 5-5 1z" fill="#255d30" stroke="none"/></svg><span>10 物件的群組</span></li>
      <li class="sub"><span class="tw leaf"></span><svg class="ti"><path d="M-1 6l8-5 7 9-7 6z" fill="#e3e3e3" stroke="none"/></svg><span>曲線</span></li>
      <li class="sub"><span class="tw shut"></span><svg class="ti"><path d="M2 4l4-2 5 3 1 5-2 5-5-1-3-5zM4 6l4 3 2 5M4 9l3 4" stroke="#151515" stroke-width="1.500"/></svg><span>8 物件的群組</span></li>
      <li class="grp"><span class="tw"></span><span>主頁</span></li>
      <li class="lay tall"><span class="tw leaf"></span><svg class="ti"><use href="#guide"/></svg><span class="flex-grow-1">導線 (全部頁面)</span><svg class="ti"><use href="#noprint"/></svg><span class="bar bblue"></span></li>
      <li class="lay"><span class="tw leaf"></span><svg class="ti"><use href="#desk"/></svg><span class="flex-grow-1">桌面</span><svg class="ti"><use href="#noprint"/></svg><span class="bar bbrown"></span></li>
      <li class="lay"><span class="tw leaf"></span><svg class="ti"><use href="#hash"/></svg><span class="flex-grow-1">文件格點</span><svg class="ti"><use href="#eye"/></svg><svg class="ti off"><use href="#lock"/></svg><svg class="ti off"><use href="#noprint"/></svg><span class="bar bgrey"></span></li>
    </ul>
    <div class="dfoot d-flex align-items-center">
      <button class="ib" aria-label="新增圖層"><svg class="ic"><use href="#layadd"/></svg></button>
      <button class="ib fly" aria-label="新增主圖層"><svg class="ic"><use href="#layadd2"/></svg></button>
      <button class="ib off fst-italic fw-bold" aria-label="新增效果">fx</button>
      <button class="ib off" aria-label="刪除"><svg class="ic"><use href="#trash"/></svg></button>
      <input class="ms-auto" type="range" value="29" aria-label="檢視大小">
    </div>
  </aside>
  <div class="side flex-shrink-0">
    <button class="sidetab d-flex align-items-center w-100"><svg width="20" height="24" viewBox="2 0 20 24" fill="none" stroke="currentColor"><use href="#layers" width="24" height="24"/></svg><span>物件(O)</span></button>
    <button class="lighter w-100" aria-label="新增泊塢視窗"><svg width="20" height="24" viewBox="2 0 20 24" fill="none" stroke="currentColor"><use href="#plus" width="24" height="24"/></svg></button>
  </div>
  <div class="vpal flex-shrink-0 d-flex flex-column align-items-center off">
    <span class="vgrip"></span>
    <button class="tw shut vm" aria-label="調色盤選單"></button>
    <svg class="ic vd"><use href="#dropper"/></svg>
    <button aria-label="向上捲動色盤" class="vsc"><svg width="12" height="8" fill="none" stroke="currentColor" stroke-width="2"><path d="M1 7l5-5 5 5"/></svg></button>
    <div class="swatches" id="vsw"></div>
    <button aria-label="向下捲動色盤" class="vsc"><svg width="12" height="8" fill="none" stroke="currentColor" stroke-width="2"><path d="M1 1l5 5 5-5"/></svg></button>
    <button class="lighter fs-6" aria-label="更多色彩">»</button>
  </div>
</main>

<footer class="statusbar line-t d-flex align-items-center flex-shrink-0">
  <button class="ib fly" aria-label="狀態列選項"><svg class="ic"><use href="#gear"/></svg></button>
  <span class="flex-grow-1 clip">接下來按一下「拖曳/縮放」; 再按一下「旋轉/扭曲」; 按兩下工具以選取所有物件; 按<span class="lat">Shift</span> 鍵並按一下多個選項; 按 <span class="lat">Alt</span> 鍵並按一下數字</span>
  <div class="stat2 d-flex align-items-center flex-shrink-0"><svg class="ic"><use href="#bucket"/></svg><svg class="chip me-1" viewBox="0 0 20 20"><path fill="#fff" d="M0 0h20v20H0z"/><path d="M0 20L20 0" stroke="#d00" stroke-width="1.500"/></svg><span>無</span></div>
  <div class="stat3 d-flex align-items-center flex-shrink-0"><svg class="ic"><use href="#pen"/></svg><span class="chip bg-black me-1 flex-shrink-0"></span><span class="text-nowrap">黑色 <span class="lat">(#0000</span></span></div>
</footer>

<script>
const NS = 'http://www.w3.org/2000/svg';
function add(parent, tag, attrs, text) {
  const n = document.createElementNS(NS, tag);
  for (const k in attrs) n.setAttribute(k, attrs[k]);
  if (text !== undefined) n.textContent = text;
  parent.appendChild(n);
}
// Colour wells of both palettes
function fill(id, list) {
  const box = document.getElementById(id);
  list.split(' ').forEach(c => {
    const b = document.createElement('button');
    b.className = 'sw';
    if (c === 'none') b.innerHTML = '<svg width="16" height="16"><path fill="#fff" d="M0 0h16v16H0z"/><path d="M2 14L14 2" stroke="#f33"/></svg>';
    else b.style.background = '#' + c;
    b.setAttribute('aria-label', c);
    box.appendChild(b);
  });
}
fill('hsw', 'none f00 f0f e6e6e6 b3b3b3 000 44a9fc f22120 339c22 fff 6699ff ccccff ccc 808080 999 ff0 7187a3 231815 00ccff ffff66 336699 ff6666 ff9933 99ffff 0070a3 9fa0a0 dcdcdc eee 717171 898989');
fill('vsw', 'none 000 1a1a1a 333 4d4d4d 666 808080 999 b3b3b3 ccc e6e6e6 fff 00f 0ff 0f0 ff0 f00 f0f 9900cc ff6600 ff99cc 663333 ccccff 9999ff 6699ff 6666ff');

// Drilled holes of the brake disc
const holes = [[54,488],[90,492],[127,502],[37,612],[67,603],[100,598],[134,600],[102,716],[131,702],[76,732],[57,762],[154,815],[137,843],[122,876],[112,910],[197,1058],[280,1083],[303,1180],[376,1170],[449,1176],[396,1219],[476,1224],[420,1268],[505,1269],[570,1240],[605,1277],[537,1312],[642,1310],[611,1183],[649,1214],[687,1239],[726,1260],[537,1198],[667,1134],[705,1152],[742,1162],[778,1168],[698,1056],[733,1057],[766,1051],[796,1042],[701,954],[730,940],[755,921],[776,896],[678,841],[696,812],[710,779],[720,741],[628,726],[634,686],[771,712],[762,750],[827,866],[848,1012],[830,1138]];
const hg = document.getElementById('holes');
holes.forEach(([x, y]) => add(hg, 'ellipse', {cx: x, cy: y, rx: 5, ry: 7, transform: `rotate(-20 ${x} ${y})`}));

// Rulers in millimetres, zero at the lower left of the sheet
function rulers() {
  const step = 5.407, h = document.getElementById('hr'), v = document.getElementById('vr');
  const s = document.getElementById('sheet').getBoundingClientRect();
  const hb = h.getBoundingClientRect(), vb = v.getBoundingClientRect();
  h.replaceChildren(); v.replaceChildren();
  const x0 = s.left + 1 - hb.left, y0 = s.top + 453 - vb.top;
  for (let i = -60; i < 120; i++) {
    const x = Math.round(x0 + i * step), len = i % 10 === 0 ? 5 : i % 5 === 0 ? 3 : 1;
    if (x > 0 && x < hb.width) {
      add(h, 'rect', {x: x, y: 15 - len, width: 1, height: len, fill: '#bbb'});
      if (i % 10 === 0 && x < hb.width - 40 && x > 20) add(h, 'text', {x: x, y: 9, 'text-anchor': 'middle'}, Math.abs(i * 5));
    }
    const y = Math.round(y0 - i * step);
    if (y > 0 && y < vb.height - 1) {
      add(v, 'rect', {x: 15 - len, y: y, width: len, height: 1, fill: '#bbb'});
      if (i % 10 === 0 && y < vb.height - 30) add(v, 'text', {'text-anchor': 'middle', transform: `translate(9 ${y}) rotate(-90)`}, Math.abs(i * 5));
    }
  }
  add(h, 'text', {class: 'cj', x: hb.width - 24, y: 9}, '公釐');
  add(h, 'path', {d: `M${hb.width - 25.5} 0V17`, stroke: '#bbb', 'stroke-dasharray': '3 2'});
  add(v, 'text', {class: 'cj', transform: `translate(10 ${vb.height - 4}) rotate(-90)`}, '公釐');
  add(v, 'path', {d: `M0 ${vb.height - 25.5}H17`, stroke: '#bbb', 'stroke-dasharray': '3 2'});
}
addEventListener('load', rulers);
addEventListener('resize', rulers);
</script>
</body>
</html>
